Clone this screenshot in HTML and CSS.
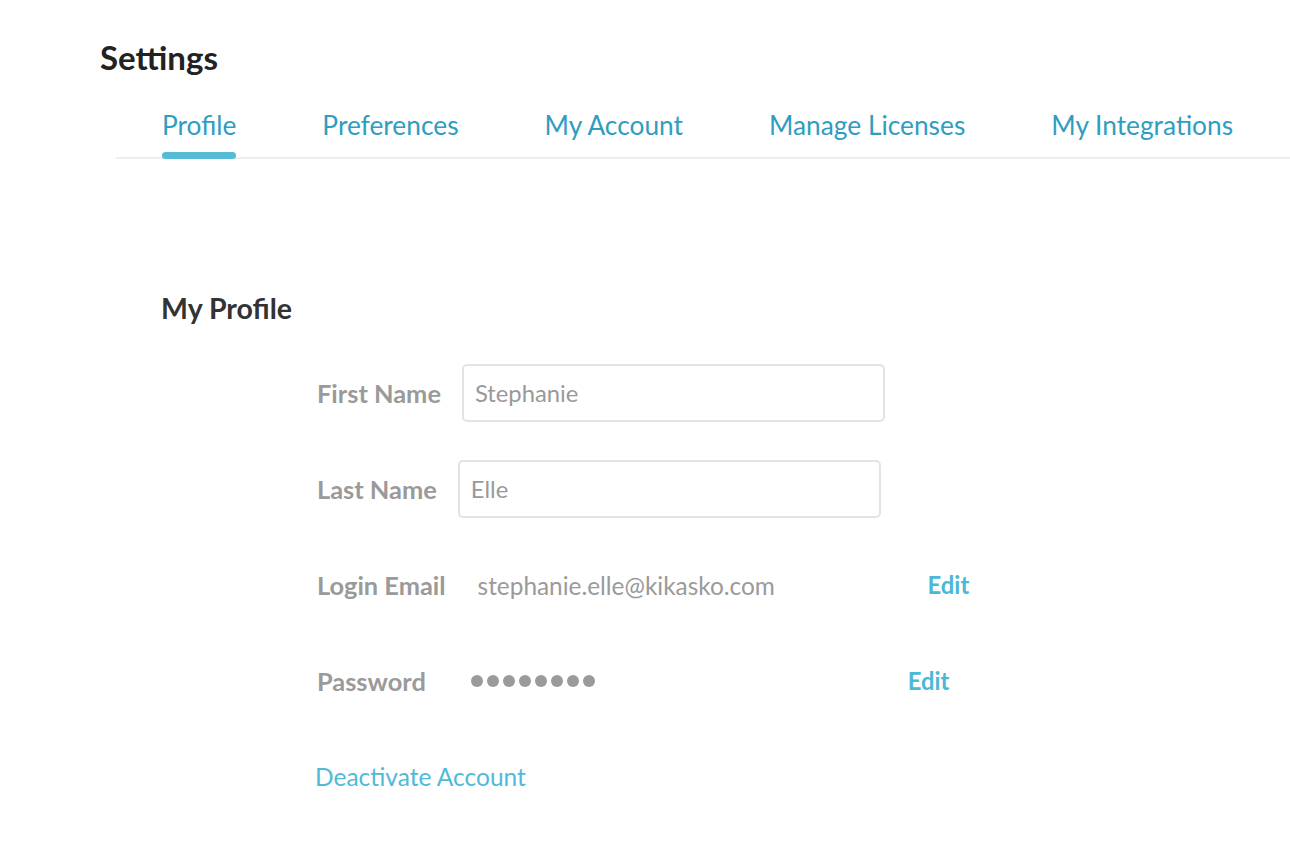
FILE: index.html
```html
<!DOCTYPE html>
<html lang="en">
  <head>
    <meta charset="UTF-8" />
    <meta name="viewport" content="width=device-width, initial-scale=1.0" />
    <title>Settings</title>
    <link rel="stylesheet" href="styles.css">
  </head>
  <body>
    <!-- page header + tabs -->
    <header>
      <h1>Settings</h1>
      <nav class="tabs">
        <a class="tab active" href="#">Profile</a>
        <a class="tab" href="#">Preferences</a>
        <a class="tab" href="#">My Account</a>
        <a class="tab" href="#">Manage Licenses</a>
        <a class="tab" href="#">My Integrations</a>
      </nav>
    </header>

    <main>
      <h2>My Profile</h2>

      <form class="profile-form">
        <div class="row">
          <label for="first-name">First Name</label>
          <input type="text" id="first-name" placeholder="Stephanie" />
        </div>

        <div class="row">
          <label for="last-name">Last Name</label>
          <input type="text" id="last-name" placeholder="Elle" />
        </div>

        <div class="row">
          <label>Login Email</label>
          <span class="value">stephanie.elle@kikasko.com</span>
          <a class="edit" href="#">Edit</a>
        </div>

        <div class="row">
          <label>Password</label>
          <span class="value dots" aria-label="password hidden">
            <i></i><i></i><i></i><i></i><i></i><i></i><i></i><i></i>
          </span>
          <a class="edit" href="#">Edit</a>
        </div>

        <a class="deactivate" href="#">Deactivate Account</a>
      </form>
    </main>
  </body>
</html>
```

FILE: styles.css
```css
body {
  margin: 0;
  font-family: Lato, "Open Sans", sans-serif;
  background-color: #fff;
  color: #333;
}

a {
  text-decoration: none;
}

header {
  padding-left: 100px;
}

h1 {
  margin: 38px 0 0;
  font-size: 33px;
  line-height: 38px;
  font-weight: 700;
  color: #222;
}

/* tabs */
.tabs {
  display: flex;
  gap: 86px;
  margin-top: 34px;
  margin-left: 16px;
  padding-left: 46px;
  border-bottom: 2px solid #eceff2;
}

.tab {
  font-size: 26.3px;
  line-height: 31px;
  color: #2f9dbf;
}

.tab::after {
  content: '';
  display: block;
  height: 7px;
  margin-top: 11px;
  margin-bottom: -2px;
  border-radius: 4px;
}

.tab.active::after {
  background-color: #56bbd6;
}

/* profile */
main {
  padding-left: 161px;
}

h2 {
  margin: 133px 0 0;
  font-size: 28.5px;
  line-height: 33px;
  font-weight: 700;
  color: #333;
}

.profile-form {
  display: flex;
  flex-direction: column;
  align-items: flex-start;
  gap: 38px;
  margin-top: 39px;
  padding-left: 156px;
}

.row {
  display: flex;
  align-items: center;
  min-height: 58px;
}

.row label {
  font-size: 25.4px;
  font-weight: 700;
  color: #9a9a9a;
}

.row input {
  box-sizing: border-box;
  width: 423px;
  height: 58px;
  margin-left: 21px;
  padding: 0 11px;
  border: 2px solid #e0e3e7;
  border-radius: 5px;
  outline: none;
  font-family: inherit;
  font-size: 23.8px;
  color: #999;
}

.row input::placeholder {
  color: #999;
}

.value {
  box-sizing: border-box;
  width: 450px;
  margin-left: 32px;
  font-size: 24.4px;
  color: #9a9a9a;
}

.dots {
  display: flex;
  gap: 4px;
  padding-left: 13px;
}

.dots i {
  width: 12px;
  height: 12px;
  border-radius: 50%;
  background-color: #9a9a9a;
}

.edit {
  font-size: 23.8px;
  font-weight: 700;
  color: #4cb7d7;
}

.deactivate {
  margin-top: 14px;
  margin-left: -2px;
  font-size: 24.5px;
  color: #4fbad8;
}
```
